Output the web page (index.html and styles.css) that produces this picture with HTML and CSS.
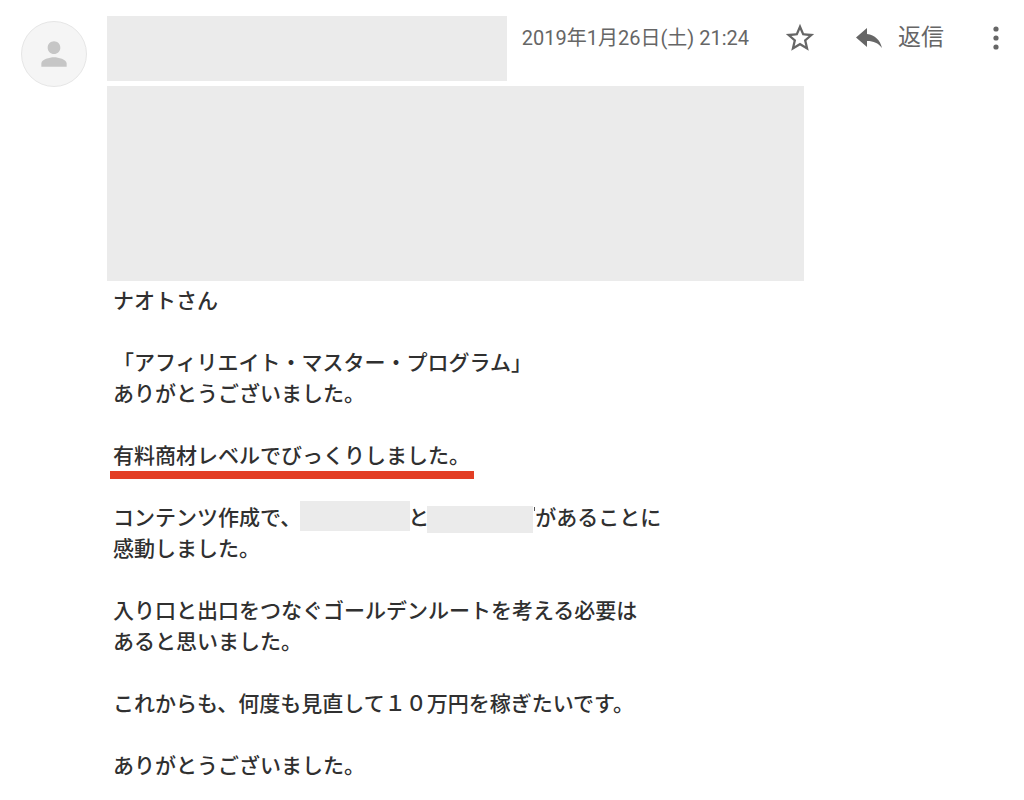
FILE: index.html
```html
<!DOCTYPE html>
<html lang="ja">
  <head>
    <meta charset="utf-8">
    <title>メール</title>
    <link rel="stylesheet" href="styles.css">
  </head>
  <body>
    <article class="mail">
      <div class="avatar">
        <svg width="38" height="38" viewBox="0 0 24 24">
          <path d="M12 12c2.2 0 4-1.8 4-4s-1.800-4-4-4-4 1.800-4 4 1.800 4 4 4zm0 2c-2.700 0-8 1.300-8 4v2h16v-2c0-2.700-5.300-4-8-4z" />
        </svg>
      </div>
      <div class="main">
        <header class="header">
          <div class="sender"></div>
          <time class="date" datetime="2019-01-26T21:24">2019年1月26日(土) 21:24</time>
          <div class="actions">
            <button class="button star" type="button" aria-label="スター">
              <svg width="34" height="34" viewBox="0 0 24 24">
                <path d="M22 9.240l-7.190-.620L12 2 9.190 8.630 2 9.240l5.460 4.730L5.820 21 12 17.270 18.180 21l-1.630-7.030L22 9.240zM12 15.400l-3.760 2.270 1-4.280-3.320-2.880 4.380-.380L12 6.100l1.710 4.040 4.380.380-3.320 2.880 1 4.280L12 15.400z" />
              </svg>
            </button>
            <button class="button reply" type="button">
              <svg width="28" height="24" viewBox="0 0 28 24">
                <path d="M12 2v6c8 1 13 6 15 14-4-5-8-7-15-7v6L1 11.500z" />
              </svg>
              返信
            </button>
            <button class="button more" type="button" aria-label="その他">
              <svg width="8" height="28" viewBox="0 0 8 28">
                <circle cx="4" cy="5" r="2.600" />
                <circle cx="4" cy="14" r="2.600" />
                <circle cx="4" cy="23" r="2.600" />
              </svg>
            </button>
          </div>
        </header>
        <div class="details"></div>
        <div class="body">
          <p>ナオトさん</p>
          <p>「アフィリエイト・マスター・プログラム」<br>ありがとうございました。</p>
          <p><span class="marked">有料商材レベルでびっくりしました。</span></p>
          <p>コンテンツ作成で、<span class="hidden"></span>と<span class="hidden hidden-low"></span>があることに<br>感動しました。</p>
          <p>入り口と出口をつなぐゴールデンルートを考える必要は<br>あると思いました。</p>
          <p>これからも、何度も見直して１０万円を稼ぎたいです。</p>
          <p>ありがとうございました。</p>
        </div>
      </div>
    </article>
  </body>
</html>
```
FILE: styles.css
```css
body {
  margin: 0;
  background: #fff;
  color: #303030;
  font-family: Roboto, "Noto Sans CJK JP", sans-serif;
}

.mail {
  display: flex;
  align-items: flex-start;
  gap: 20px;
  padding: 16px 24px 0 21px;
}

.avatar {
  display: flex;
  flex: none;
  align-items: center;
  justify-content: center;
  box-sizing: border-box;
  width: 66px;
  height: 66px;
  margin-top: 5px;
  border: 1px solid #e6e6e6;
  border-radius: 50%;
  background: #f5f5f5;
}

.avatar svg {
  fill: #c6c6c6;
}

.main {
  flex: 1;
  min-width: 0;
}

.header {
  display: flex;
  align-items: flex-start;
}

.sender {
  flex: 1;
  height: 65px;
  background: #ebebeb;
}

.date {
  margin-left: 15px;
  color: #666;
  font-size: 20px;
  line-height: 44px;
  white-space: nowrap;
}

.actions {
  display: flex;
  align-items: center;
  height: 44px;
  margin-left: 34px;
}

.button {
  display: flex;
  align-items: center;
  padding: 0;
  border: 0;
  background: none;
  color: #666;
  font: inherit;
  cursor: pointer;
}

.button svg {
  fill: #666;
}

.reply {
  gap: 15px;
  margin-left: 38px;
  font-size: 23px;
  line-height: 46px;
}

.more {
  margin-left: 48px;
}

.details {
  width: 78%;
  height: 195px;
  margin-top: 5px;
  background: #ebebeb;
}

.body {
  padding: 3px 0 20px 6px;
  font-family: "Noto Sans CJK JP", sans-serif;
  font-size: 21px;
  font-weight: 500;
  line-height: 31px;
}

.body p {
  margin: 0 0 31px;
}

.marked {
  position: relative;
}

/* red marker under the sentence */
.marked::after {
  content: "";
  position: absolute;
  left: -3px;
  right: -4px;
  bottom: -10px;
  height: 8px;
  background: #e33e25;
}

.hidden {
  display: inline-block;
  width: 110px;
  height: 30px;
  margin: 0 -2px 0 -1px;
  background: #ebebeb;
  vertical-align: top;
}

.hidden-low {
  position: relative;
  width: 106px;
  height: 27px;
  margin: 5px 2px -2px -2px;
}

/* tip of the covered letter */
.hidden-low::after {
  content: "";
  position: absolute;
  top: 1px;
  right: -2px;
  width: 1px;
  height: 4px;
  background: #555;
}
```
